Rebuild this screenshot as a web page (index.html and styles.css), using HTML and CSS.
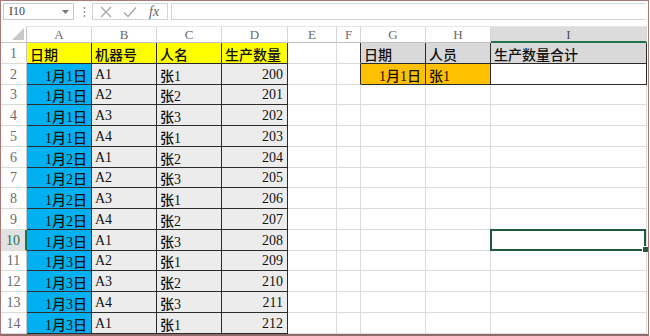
FILE: index.html
```html
<!DOCTYPE html>
<html lang="zh">
<head>
<meta charset="utf-8">
<link rel="stylesheet" href="styles.css">
</head>
<body>
<div class="frame">
  <div class="fbar">
    <div class="namebox"><span>I10</span><svg class="dd" width="7" height="4" viewBox="0 0 7 4"><path d="M0 0H7L3.5 4Z" fill="#777"/></svg></div>
    <svg class="dots" width="3" height="12" viewBox="0 0 3 12"><circle cx="1.5" cy="2" r="0.9" fill="#888"/><circle cx="1.5" cy="6" r="0.9" fill="#888"/><circle cx="1.5" cy="10" r="0.9" fill="#888"/></svg>
    <div class="btns">
      <svg width="12" height="12" viewBox="0 0 12 12"><path d="M1 1L11 11M11 1L1 11" stroke="#a8a8a8" stroke-width="1.4" fill="none"/></svg>
      <svg width="14" height="12" viewBox="0 0 14 12"><path d="M1 6.5L5 10.5L13 1.5" stroke="#a8a8a8" stroke-width="1.4" fill="none"/></svg>
      <span class="fx">fx</span>
    </div>
    <div class="input"></div>
  </div>
  <div class="grid">
    <div class="corner"><svg width="12" height="12" viewBox="0 0 12 12"><path d="M12 0V12H0Z" fill="#c9c9c9"/></svg></div>
    <div class="ch">A</div><div class="ch">B</div><div class="ch">C</div><div class="ch">D</div><div class="ch">E</div><div class="ch">F</div><div class="ch">G</div><div class="ch">H</div><div class="ch chs">I</div>

    <div class="rh">1</div><div class="c k y">日期</div><div class="c k y">机器号</div><div class="c k y">人名</div><div class="c k y">生产数量</div><div class="c"></div><div class="c kr"></div><div class="c k h">日期</div><div class="c k h">人员</div><div class="c k h">生产数量合计</div>
    <div class="rh">2</div><div class="c k b r">1月1日</div><div class="c k g">A1</div><div class="c k g">张1</div><div class="c k g r">200</div><div class="c"></div><div class="c kr"></div><div class="c k o r">1月1日</div><div class="c k o">张1</div><div class="c k"></div>
    <div class="rh">3</div><div class="c k b r">1月1日</div><div class="c k g">A2</div><div class="c k g">张2</div><div class="c k g r">201</div><div class="c"></div><div class="c"></div><div class="c"></div><div class="c"></div><div class="c"></div>
    <div class="rh">4</div><div class="c k b r">1月1日</div><div class="c k g">A3</div><div class="c k g">张3</div><div class="c k g r">202</div><div class="c"></div><div class="c"></div><div class="c"></div><div class="c"></div><div class="c"></div>
    <div class="rh">5</div><div class="c k b r">1月1日</div><div class="c k g">A4</div><div class="c k g">张1</div><div class="c k g r">203</div><div class="c"></div><div class="c"></div><div class="c"></div><div class="c"></div><div class="c"></div>
    <div class="rh">6</div><div class="c k b r">1月2日</div><div class="c k g">A1</div><div class="c k g">张2</div><div class="c k g r">204</div><div class="c"></div><div class="c"></div><div class="c"></div><div class="c"></div><div class="c"></div>
    <div class="rh">7</div><div class="c k b r">1月2日</div><div class="c k g">A2</div><div class="c k g">张3</div><div class="c k g r">205</div><div class="c"></div><div class="c"></div><div class="c"></div><div class="c"></div><div class="c"></div>
    <div class="rh">8</div><div class="c k b r">1月2日</div><div class="c k g">A3</div><div class="c k g">张1</div><div class="c k g r">206</div><div class="c"></div><div class="c"></div><div class="c"></div><div class="c"></div><div class="c"></div>
    <div class="rh">9</div><div class="c k b r">1月2日</div><div class="c k g">A4</div><div class="c k g">张2</div><div class="c k g r">207</div><div class="c"></div><div class="c"></div><div class="c"></div><div class="c"></div><div class="c"></div>
    <div class="rh rhs">10</div><div class="c k b r">1月3日</div><div class="c k g">A1</div><div class="c k g">张3</div><div class="c k g r">208</div><div class="c"></div><div class="c"></div><div class="c"></div><div class="c"></div><div class="c sel"></div>
    <div class="rh">11</div><div class="c k b r">1月3日</div><div class="c k g">A2</div><div class="c k g">张1</div><div class="c k g r">209</div><div class="c"></div><div class="c"></div><div class="c"></div><div class="c"></div><div class="c"></div>
    <div class="rh">12</div><div class="c k b r">1月3日</div><div class="c k g">A3</div><div class="c k g">张2</div><div class="c k g r">210</div><div class="c"></div><div class="c"></div><div class="c"></div><div class="c"></div><div class="c"></div>
    <div class="rh">13</div><div class="c k b r">1月3日</div><div class="c k g">A4</div><div class="c k g">张3</div><div class="c k g r">211</div><div class="c"></div><div class="c"></div><div class="c"></div><div class="c"></div><div class="c"></div>
    <div class="rh">14</div><div class="c k b r">1月3日</div><div class="c k g">A1</div><div class="c k g">张1</div><div class="c k g r">212</div><div class="c"></div><div class="c"></div><div class="c"></div><div class="c"></div><div class="c"></div>
  </div>
</div>
</body>
</html>
```

FILE: styles.css
```css
* { box-sizing: border-box; }
html, body { margin: 0; padding: 0; background: #fff; }
.frame {
  width: 649px;
  height: 336px;
  border: 1px solid #a97878;
  border-bottom: 2px solid #8f6a6a;
  overflow: hidden;
  background: #fff;
  font-family: "Liberation Serif", "Noto Sans CJK SC", serif;
}
.fbar {
  height: 25px;
  display: flex;
  align-items: flex-start;
  padding: 2px 0 0 2px;
}
.namebox {
  width: 71px;
  height: 17px;
  border: 1px solid #c8c8c8;
  display: flex;
  align-items: center;
  justify-content: space-between;
  padding: 0 4px 0 5px;
  font-size: 12px;
  color: #444;
}
.dots { margin: 3px 6px 0 9px; }
.btns {
  width: 76px;
  height: 17px;
  border: 1px solid #d4d4d4;
  display: flex;
  align-items: center;
  gap: 11px;
  padding-left: 7px;
}
.fx {
  font-style: italic;
  font-size: 14px;
  color: #666;
  line-height: 1;
  margin-left: 1px;
}
.input {
  flex: 1;
  height: 17px;
  margin-left: 3px;
  margin-right: 2px;
  border: 1px solid #d4d4d4;
  border-right: none;
}
.grid {
  display: grid;
  grid-template-columns: 26px 65px 65px 65px 66px 49px 24px 65px 65px 156px;
  grid-template-rows: 17px repeat(14, 20.75px);
}
.corner {
  border-right: 1px solid #c6c6c6;
  border-bottom: 1px solid #c6c6c6;
  display: flex;
  align-items: flex-end;
  justify-content: flex-end;
  padding: 0 2px 2px 0;
}
.ch {
  border-right: 1px solid #d6d6d6;
  border-bottom: 1px solid #c0c0c0;
  text-align: center;
  font-size: 13px;
  line-height: 16px;
  color: #6a6a6a;
  border-top: 1px solid #e6e6e6;
}
.chs {
  background: #dcdcdc;
  border-bottom: 2px solid #217346;
  color: #4a4a4a;
}
.rh {
  border-right: 1px solid #c6c6c6;
  border-bottom: 1px solid #dadada;
  font-size: 14px;
  color: #6a6a6a;
  display: flex;
  align-items: center;
  justify-content: center;
  padding-top: 2px;
}
.rhs {
  background: #e1e1e1;
  color: #217346;
  border-right: 2px solid #217346;
}
.c {
  border-right: 1px solid #dcdcdc;
  border-bottom: 1px solid #dcdcdc;
  font-size: 14px;
  font-weight: 500;
  color: #111;
  display: flex;
  align-items: center;
  padding: 2px 3px 0 3px;
  white-space: nowrap;
  position: relative;
}
.c.r { justify-content: flex-end; padding-right: 4px; }
.k { border-right-color: #2b2b2b; border-bottom-color: #2b2b2b; }
.kr { border-right-color: #2b2b2b; }
.y { background: #ffff00; }
.b { background: #00b0f0; }
.g { background: #ececec; }
.h { background: #d9d9d9; }
.o { background: #ffc000; }
.sel::after {
  content: "";
  position: absolute;
  left: -1px;
  top: -1px;
  right: 0;
  bottom: -1px;
  border: 2px solid #1f5a3c;
}
.sel::before {
  content: "";
  position: absolute;
  right: -3px;
  bottom: -3px;
  width: 5px;
  height: 5px;
  background: #1f5a3c;
  border: 1px solid #fff;
  z-index: 1;
}
```
